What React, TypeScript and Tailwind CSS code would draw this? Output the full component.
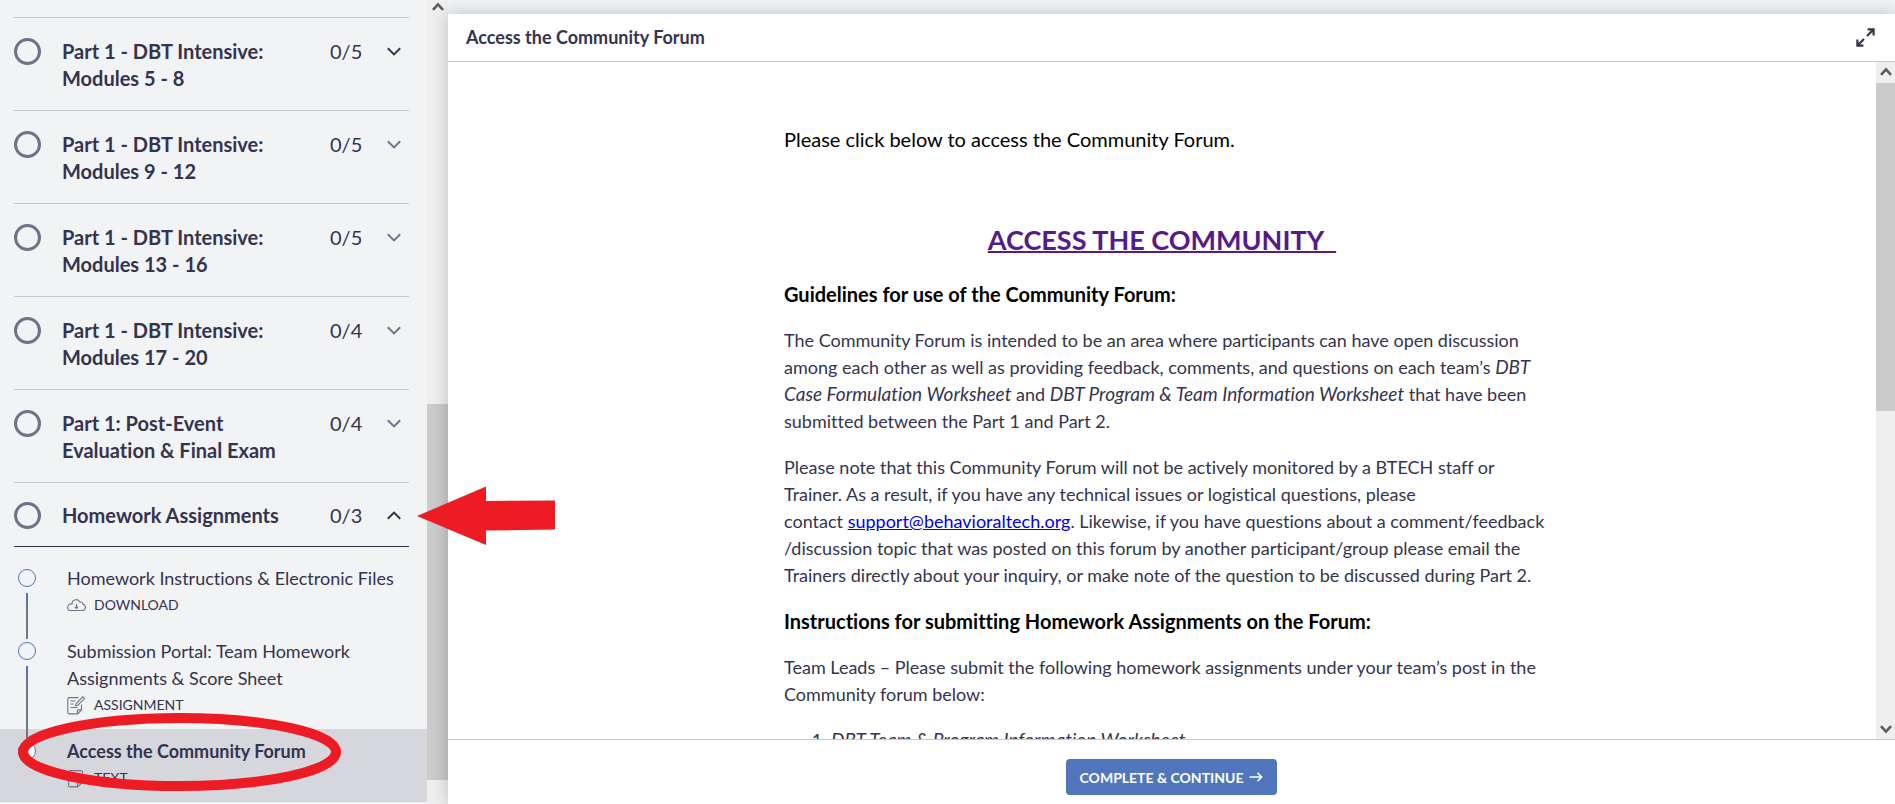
import React from "react";

type Section = { title: string[]; done: string; active?: boolean };

const sections: Section[] = [
  { title: ["Part 1 - DBT Intensive:", "Modules 5 - 8"], done: "0/5", active: true },
  { title: ["Part 1 - DBT Intensive:", "Modules 9 - 12"], done: "0/5" },
  { title: ["Part 1 - DBT Intensive:", "Modules 13 - 16"], done: "0/5" },
  { title: ["Part 1 - DBT Intensive:", "Modules 17 - 20"], done: "0/4" },
  { title: ["Part 1: Post-Event", "Evaluation & Final Exam"], done: "0/4" },
];

function Chevron({ up, dark }: { up?: boolean; dark?: boolean }) {
  return (
    <svg
      width="14"
      height="9"
      viewBox="0 0 14 9"
      fill="none"
      stroke={dark ? "#34344e" : "#71758a"}
      strokeWidth="2"
      aria-hidden="true"
    >
      <path d={up ? "M0.8 7.8 7 1.6l6.2 6.2" : "M0.8 1.2 7 7.4l6.2-6.2"} />
    </svg>
  );
}

function ScrollArrow({ down }: { down?: boolean }) {
  return (
    <svg width="12" height="9" viewBox="0 0 12 9" fill="none" stroke="#5c5c5c" strokeWidth="2.6" aria-hidden="true">
      <path d={down ? "M1 1.2 6 6.6l5-5.4" : "M1 7.8 6 2.4l5 5.4"} />
    </svg>
  );
}

function SectionRow({ title, done, active, open }: Section & { open?: boolean }) {
  return (
    <button
      type="button"
      aria-expanded={!!open}
      className={
        open
          ? "relative flex h-16 w-full items-start border-b border-[#34344e] pt-[19px] text-left"
          : "flex w-full items-start border-b border-[#c5c8d2] pt-5 pb-[18px] text-left"
      }
    >
      <span className="size-[27px] shrink-0 rounded-full border-3 border-[#6f7387]" />
      <span className="ml-[21px] flex-1 text-[20px] leading-[27px] font-bold">
        {title.map((line) => (
          <span key={line} className="block">
            {line}
          </span>
        ))}
      </span>
      <span className="w-[57px] text-[20px] leading-[27px]">{done}</span>
      <span className="flex h-[27px] w-[22px] items-center">
        <Chevron up={open} dark={active || open} />
      </span>
      {open && (
        <svg
          className="pointer-events-none absolute top-[3px] left-[403px] z-20"
          width="140"
          height="60"
          viewBox="0 0 140 60"
          aria-hidden="true"
        >
          <path d="M0 30 69 0.5V15L138 14.5V43.5L69 44.5V59Z" fill="#ed1c24" />
        </svg>
      )}
    </button>
  );
}

function CloudIcon() {
  return (
    <svg width="19" height="18" viewBox="0 0 19 18" fill="none" stroke="#71758a" strokeWidth="1.1" aria-hidden="true">
      <path d="M3.600 14.500h11.600a3.100 3.100 0 0 0 .9-6.100c-.1-1.900-1.700-2.700-3.100-2.200C12 4.300 10.400 3.500 8.700 3.700 6.500 4 5 5.700 5 8 2.700 7.500.6 9.200.6 11.400c0 1.800 1.300 3.100 3 3.100Z" />
      <path d="M9.500 8v4.500M7.700 10.700l1.800 1.800 1.800-1.800" />
    </svg>
  );
}

function AssignmentIcon() {
  return (
    <svg width="19" height="19" viewBox="0 0 19 19" fill="none" stroke="#71758a" strokeWidth="1.100" aria-hidden="true">
      <path d="M11.500 1.600H2.200Q.8 1.600.8 3v13.500q0 1.400 1.400 1.400h8.300l4-4V8.500" />
      <path d="M10.500 17.500v-3.600h3.800" />
      <path d="M8.500 9.800 9.200 7.500 15.800.9l1.700 1.700-6.600 6.600ZM3.500 5h5M3.500 8h3M3.500 11.500h7" />
    </svg>
  );
}

function TextIcon() {
  return (
    <svg width="19" height="19" viewBox="0 0 19 19" fill="none" stroke="#71758a" strokeWidth="1.100" aria-hidden="true">
      <path d="M10.500 17.900H3Q1.600 17.900 1.600 16.500V3Q1.600 1.600 3 1.600h11q1.400 0 1.400 1.400v10.500l-4.900 4.400v-4.200h4.700" />
      <path d="M4 5h9M4 8.500h9M4 12h4.500" />
    </svg>
  );
}

function Lesson(props: {
  title: string;
  kind: string;
  icon: React.ReactNode;
  current?: boolean;
  line?: string;
}) {
  return (
    <li className={props.current ? "relative bg-[#d6d7dc]" : "relative"}>
      <a href="#lesson" className="flex pt-[9px] pr-5 pb-[14px] pl-[18px]">
        <span
          className={
            props.current
              ? "mt-1 size-[18px] shrink-0 rounded-full border border-[#4e74b9] bg-white"
              : "mt-1 size-[18px] shrink-0 rounded-full border border-[#4e74b9]"
          }
        />
        <span className="ml-[31px] flex flex-1 flex-col gap-[3px]">
          <span className={props.current ? "text-[18px] leading-[27px] font-bold" : "text-[18px] leading-[27px]"}>
            {props.title}
          </span>
          <span className="flex h-5 items-center gap-2 text-[14px] leading-5 uppercase">
            {props.icon}
            {props.kind}
          </span>
        </span>
      </a>
      {props.line && <span className={props.line} />}
      {props.current && (
        <svg
          className="pointer-events-none absolute -top-4 left-[18px] z-20"
          width="324"
          height="78"
          viewBox="0 0 324 78"
          aria-hidden="true"
        >
          <ellipse cx="161.500" cy="39" rx="156.500" ry="34" fill="none" stroke="#ed1c24" strokeWidth="10" />
        </svg>
      )}
    </li>
  );
}

export default function App() {
  return (
    <div className="flex h-screen overflow-hidden bg-[#f1f3f5] font-['Lato',sans-serif] text-[#34344e] [font-variant-ligatures:none]">
      <aside className="flex w-[448px] shrink-0">
        <nav aria-label="Course contents" className="min-w-0 flex-1">
          <div className="ml-[14px] mr-[18px] mt-[17px] border-t border-[#c5c8d2]">
            {sections.map((s) => (
              <SectionRow key={s.title[1]} {...s} />
            ))}
            <SectionRow title={["Homework Assignments"]} done="0/3" open />
          </div>
          <ul className="pt-[9px]">
            <Lesson
              title="Homework Instructions & Electronic Files"
              kind="Download"
              icon={<CloudIcon />}
              line="absolute top-[37px] left-[26px] h-[46px] w-[2px] bg-linear-to-b from-[#4e74b9] from-20% to-[#71758a] to-20%"
            />
            <Lesson
              title="Submission Portal: Team Homework Assignments & Score Sheet"
              kind="Assignment"
              icon={<AssignmentIcon />}
              line="absolute top-[37px] left-[26px] z-10 h-[72px] w-[2px] bg-linear-to-b from-[#4e74b9] from-12% to-[#71758a] to-12%"
            />
            <Lesson title="Access the Community Forum" kind="Text" icon={<TextIcon />} current />
          </ul>
        </nav>
        <div className="flex w-[21px] flex-col items-center bg-[#efefef] pt-[2px]" aria-hidden="true">
          <ScrollArrow />
          <div className="mt-[393px] h-[376px] w-full bg-[#cbcbcb]" />
        </div>
      </aside>

      <main className="mt-[14px] flex min-w-0 flex-1 flex-col bg-white shadow-[0_0_16px_rgba(0,0,0,0.22)]">
        <header className="flex h-12 shrink-0 items-center justify-between border-b border-[#c5c8d2] pr-5 pl-[18px]">
          <h1 className="text-[18px] leading-[27px] font-bold">Access the Community Forum</h1>
          <button type="button" aria-label="Expand">
            <svg width="19" height="19" viewBox="0 0 19 19" fill="none" stroke="#34344e" strokeWidth="2.200" aria-hidden="true">
              <path d="M11.600 1.400h6v6M17.200 1.800l-6.200 6.200M7.400 17.600h-6v-6M1.800 17.200 8 11" />
            </svg>
          </button>
        </header>

        <div className="flex min-h-0 flex-1">
          <article className="min-w-0 flex-1 overflow-hidden">
            <div className="mx-auto max-w-[756px] pt-16 text-[18px] leading-[27px]">
              <p className="text-[20px] text-black">Please click below to access the Community Forum.</p>
              <p className="mt-[66px] text-center text-[27px] leading-[42px] font-bold text-[#551a8b]">
                <a href="#community" className="underline decoration-2">
                  ACCESS THE COMMUNITY{"\u00a0\u00a0"}
                </a>
              </p>
              <h2 className="mt-5 text-[20px] font-bold text-black">Guidelines for use of the Community Forum:</h2>
              <p className="mt-[19px]">
                The Community Forum is intended to be an area where participants can have open discussion among each
                other as well as providing feedback, comments, and questions on each team’s{" "}
                <em className="text-[19px] leading-none">DBT Case Formulation Worksheet</em> and{" "}
                <em className="text-[19px] leading-none">DBT Program &amp; Team Information Worksheet</em> that have
                been submitted between the Part 1 and Part 2.
              </p>
              <p className="-mr-3 mt-[19px]">
                Please note that this Community Forum will not be actively monitored by a BTECH staff or Trainer. As a
                result, if you have any technical issues or logistical questions, please contact{"\u00a0"}
                <a href="mailto:support@behavioraltech.org" className="text-[#0000ee] underline">
                  support@behavioraltech.org
                </a>
                . Likewise, if you have questions about a comment/feedback
                <wbr />
                /discussion topic that was posted on this forum by another participant/group please email the Trainers
                directly about your inquiry, or make note of the question to be discussed during Part 2.
              </p>
              <h2 className="mt-[19px] text-[20px] font-bold text-black">
                Instructions for submitting Homework Assignments on the Forum:
              </h2>
              <p className="mt-[19px]">
                Team Leads – Please submit the following homework assignments under your team’s post in the Community
                forum below:
              </p>
              <ol className="mt-[19px] list-decimal pl-[47px]">
                <li>
                  <em className="text-[19px] leading-none">DBT Team &amp; Program Information Worksheet</em>
                </li>
              </ol>
            </div>
          </article>
          <div className="flex w-[19px] flex-col items-center bg-[#efefef] pt-[5px] pb-[5px]" aria-hidden="true">
            <ScrollArrow />
            <div className="mt-[7px] h-[328px] w-full bg-[#cbcbcb]" />
            <div className="mt-auto flex">
              <ScrollArrow down />
            </div>
          </div>
        </div>

        <footer className="flex h-[65px] shrink-0 items-start justify-center border-t border-[#c5c8d2] pt-[19px]">
          <button
            type="button"
            className="flex h-9 items-center gap-[6px] rounded bg-[#5176bb] px-[14px] text-[14px] font-bold text-white"
          >
            COMPLETE &amp; CONTINUE
            <svg width="14" height="12" viewBox="0 0 14 12" fill="none" stroke="#fff" strokeWidth="1.500" aria-hidden="true">
              <path d="M.5 6h12M8.500 1.800 12.700 6 8.500 10.200" />
            </svg>
          </button>
        </footer>
      </main>
    </div>
  );
}
